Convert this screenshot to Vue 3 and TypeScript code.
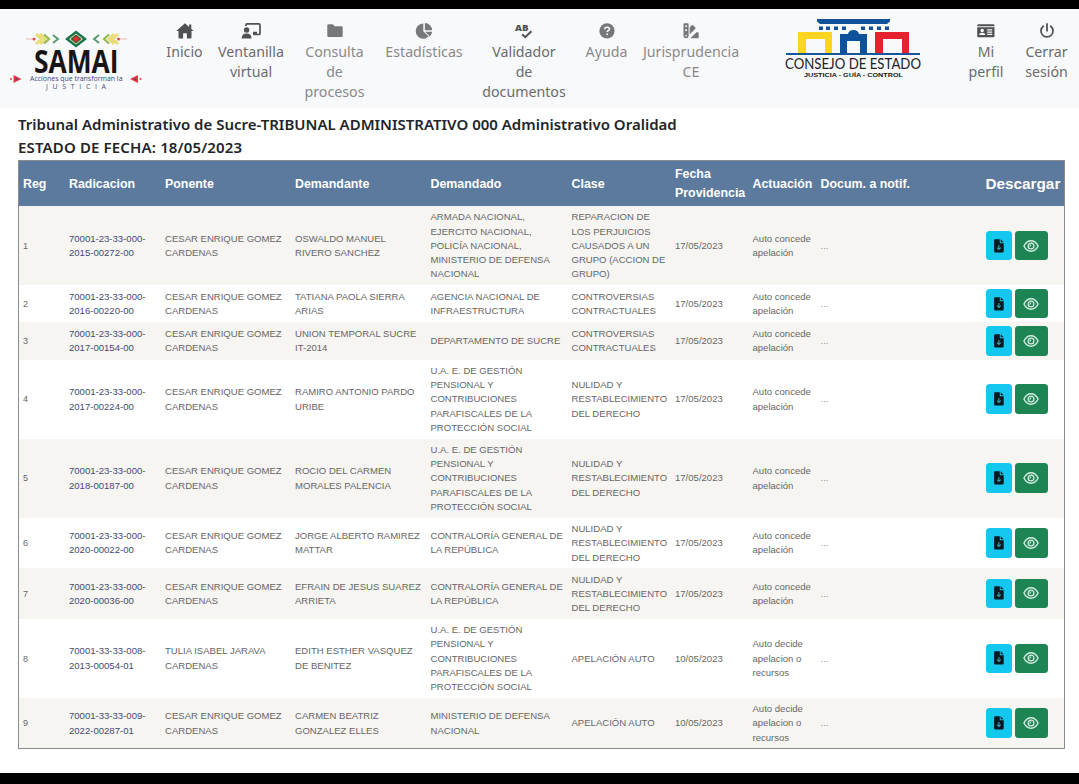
<script setup lang="ts">
interface NavItem {
  icon: string
  lines: string[]
  muted?: boolean
}
interface Row {
  height: number
  rad: string[]
  ponente: string[]
  demandante: string[]
  demandado: string[]
  clase: string[]
  fecha: string
  actuacion: string[]
}

const nav: NavItem[] = [
  { icon: 'home', lines: ['Inicio'] },
  { icon: 'board', lines: ['Ventanilla', 'virtual'] },
  { icon: 'folder', lines: ['Consulta', 'de', 'procesos'], muted: true },
  { icon: 'pie', lines: ['Estadísticas'], muted: true },
  { icon: 'spell', lines: ['Validador', 'de', 'documentos'] },
  { icon: 'help', lines: ['Ayuda'], muted: true },
  { icon: 'swatch', lines: ['Jurisprudencia', 'CE'], muted: true },
]
const account: NavItem[] = [
  { icon: 'card', lines: ['Mi', 'perfil'] },
  { icon: 'power', lines: ['Cerrar', 'sesión'] },
]

const headers: string[][] = [
  ['Reg'], ['Radicacion'], ['Ponente'], ['Demandante'], ['Demandado'], ['Clase'],
  ['Fecha', 'Providencia'], ['Actuación'], ['Docum. a notif.'], ['Descargar'],
]

const cesar = ['CESAR ENRIQUE GOMEZ', 'CARDENAS']
const ugpp = ['U.A. E. DE GESTIÓN', 'PENSIONAL Y', 'CONTRIBUCIONES', 'PARAFISCALES DE LA', 'PROTECCIÓN SOCIAL']
const nulidad = ['NULIDAD Y', 'RESTABLECIMIENTO', 'DEL DERECHO']
const controversias = ['CONTROVERSIAS', 'CONTRACTUALES']
const contraloria = ['CONTRALORÍA GENERAL DE', 'LA REPÚBLICA']
const concede = ['Auto concede', 'apelación']
const decide = ['Auto decide', 'apelacion o', 'recursos']

const rows: Row[] = [
  { height: 79, rad: ['70001-23-33-000-', '2015-00272-00'], ponente: cesar, demandante: ['OSWALDO MANUEL', 'RIVERO SANCHEZ'], demandado: ['ARMADA NACIONAL,', 'EJERCITO NACIONAL,', 'POLICÍA NACIONAL,', 'MINISTERIO DE DEFENSA', 'NACIONAL'], clase: ['REPARACION DE', 'LOS PERJUICIOS', 'CAUSADOS A UN', 'GRUPO (ACCION DE', 'GRUPO)'], fecha: '17/05/2023', actuacion: concede },
  { height: 37.3, rad: ['70001-23-33-000-', '2016-00220-00'], ponente: cesar, demandante: ['TATIANA PAOLA SIERRA', 'ARIAS'], demandado: ['AGENCIA NACIONAL DE', 'INFRAESTRUCTURA'], clase: controversias, fecha: '17/05/2023', actuacion: concede },
  { height: 37.3, rad: ['70001-23-33-000-', '2017-00154-00'], ponente: cesar, demandante: ['UNION TEMPORAL SUCRE', 'IT-2014'], demandado: ['DEPARTAMENTO DE SUCRE'], clase: controversias, fecha: '17/05/2023', actuacion: concede },
  { height: 79, rad: ['70001-23-33-000-', '2017-00224-00'], ponente: cesar, demandante: ['RAMIRO ANTONIO PARDO', 'URIBE'], demandado: ugpp, clase: nulidad, fecha: '17/05/2023', actuacion: concede },
  { height: 79, rad: ['70001-23-33-000-', '2018-00187-00'], ponente: cesar, demandante: ['ROCIO DEL CARMEN', 'MORALES PALENCIA'], demandado: ugpp, clase: nulidad, fecha: '17/05/2023', actuacion: concede },
  { height: 50.6, rad: ['70001-23-33-000-', '2020-00022-00'], ponente: cesar, demandante: ['JORGE ALBERTO RAMIREZ', 'MATTAR'], demandado: contraloria, clase: nulidad, fecha: '17/05/2023', actuacion: concede },
  { height: 50.6, rad: ['70001-23-33-000-', '2020-00036-00'], ponente: cesar, demandante: ['EFRAIN DE JESUS SUAREZ', 'ARRIETA'], demandado: contraloria, clase: nulidad, fecha: '17/05/2023', actuacion: concede },
  { height: 79, rad: ['70001-33-33-008-', '2013-00054-01'], ponente: ['TULIA ISABEL JARAVA', 'CARDENAS'], demandante: ['EDITH ESTHER VASQUEZ', 'DE BENITEZ'], demandado: ugpp, clase: ['APELACIÓN AUTO'], fecha: '10/05/2023', actuacion: decide },
  { height: 50.6, rad: ['70001-33-33-009-', '2022-00287-01'], ponente: cesar, demandante: ['CARMEN BEATRIZ', 'GONZALEZ ELLES'], demandado: ['MINISTERIO DE DEFENSA', 'NACIONAL'], clase: ['APELACIÓN AUTO'], fecha: '10/05/2023', actuacion: decide },
]

const cells = (r: Row, i: number): string[][] => [
  [String(i + 1)], r.rad, r.ponente, r.demandante, r.demandado, r.clase, [r.fecha], r.actuacion, ['...'],
]
</script>

<template>
  <div class="page">
    <div class="bar top"></div>
    <header class="navbar">
      <svg class="samai" width="160" height="99" viewBox="0 9 160 99">
        <g fill="none" stroke-width="2.2">
          <path d="M26 39h9M118 39h9" stroke="#efb5ad" stroke-width="1" />
          <path d="M36 34l5 5-5 5M40 34l5 5-5 5M118 34l-5 5 5 5M114 34l-5 5 5 5" stroke="#e9dc7a" stroke-width="3" />
          <path d="M44 34.5l5 4.5-5 4.5M109 34.5l-5 4.5 5 4.5" stroke="#94b94f" />
          <path d="M53 35l5 4-5 4M99 35l-5 4 5 4" stroke="#5b9e72" stroke-width="2" />
        </g>
        <circle cx="34" cy="39" r="1.5" fill="#dd5148" /><circle cx="118.500" cy="39" r="1.500" fill="#dd5148" />
        <path d="M65 39l11-8.500 11 8.500-11 8.500z" fill="#16764a" />
        <path d="M69 39l7-5.500 7 5.500-7 5.500z" fill="#f0d9ac" />
        <path d="M70.500 39l5.500-4.500 5.500 4.500-5.500 4.500z" fill="#315b3c" />
        <path d="M72.500 39l3.500-3 3.500 3-3.500 3z" fill="#e52c30" />
        <text x="34" y="73.300" class="samai-name" textLength="84.500" lengthAdjust="spacingAndGlyphs">SAMAI</text>
        <text x="30" y="81.200" class="samai-tag" textLength="92.500" lengthAdjust="spacingAndGlyphs">Acciones que transforman la</text>
        <text x="46" y="88.500" class="samai-just" textLength="60">JUSTICIA</text>
        <path d="M13.500 75l8 4-8 4zM138 75l-8 4 8 4z" fill="#e53742" />
        <path d="M15.500 77.500l3 1.500-3 1.500zM136 77.500l-3 1.500 3 1.500z" fill="#70445f" />
        <circle cx="11" cy="79" r="1" fill="#cf4945" /><circle cx="140.500" cy="79" r="1" fill="#cf4945" />
      </svg>

      <a v-for="item in nav" :key="item.icon" class="item" :class="{ muted: item.muted }">
        <svg class="icon" :class="item.icon" width="20" height="16" viewBox="0 0 20 16" fill="currentColor">
          <path v-if="item.icon === 'home'" d="M10 0.300L1.200 8.100h2.300v6.500q0 .900.900.900h3.700v-4.700q0-.600.600-.600h2.600q.600 0 .600.600v4.700h3.700q.900 0 .900-.900V8.100h2.300L16.300 5.900V1.500h-2.200v2.400z" />
          <template v-else-if="item.icon === 'board'">
            <path d="M5 3V1.900Q5 .900 6 .900h12q1 0 1 1v8.600q0 1-1 1h-5.500" fill="none" stroke="currentColor" stroke-width="1.700" />
            <circle cx="5.600" cy="7" r="2.700" />
            <path d="M.700 15.500q0-5 4.900-5t4.900 5zM12 8.800h4v3h-4z" />
          </template>
          <path v-else-if="item.icon === 'folder'" d="M2.300 2.500Q2.300 1.200 3.600 1.200h4.200l2 2h6.600q1.300 0 1.300 1.300v8.300q0 1.300-1.300 1.300H3.600q-1.300 0-1.300-1.300z" />
          <template v-else-if="item.icon === 'pie'">
            <path d="M9.300 .500v7.700l5.300 5.400A7.600 7.600 0 1 1 9.300 .500z" />
            <path d="M10.900 0a7.400 7.400 0 0 1 7.200 7.200h-7.200z" /><path d="M11.200 8.800h7a7.400 7.400 0 0 1-2.400 4.700z" />
          </template>
          <template v-else-if="item.icon === 'spell'">
            <text x="1" y="7.900" font-size="9.500" font-weight="800" textLength="13.500" lengthAdjust="spacingAndGlyphs">AB</text>
            <path d="M8.200 11.200l3 3 6.200-6" fill="none" stroke="currentColor" stroke-width="2" />
          </template>
          <template v-else-if="item.icon === 'help'">
            <circle cx="10" cy="7.900" r="7.600" />
            <path d="M7.600 6.200q.200-2 2.500-2 2.400 0 2.400 1.800 0 1.100-1.300 1.700-1.100.500-1.100 1.300" fill="none" stroke="#f8f9fb" stroke-width="1.500" />
            <circle cx="10.100" cy="11.300" r="1" fill="#f8f9fb" />
          </template>
          <template v-else>
            <path fill-rule="evenodd" d="M3.400.300h3.300q.900 0 .900.900v11.600q0 2.500-2.500 2.500t-2.600-2.500V1.200q0-.900.900-.900zM4.200 2.400v1.700h1.800V2.400zM4.200 6.300v1.700h1.800V6.300zM5.100 11.900a.800.800 0 1 0 .010 0z" />
            <path d="M8.700 4.300l2.100-2q.700-.600 1.300 0l2.200 2.200q.600.700 0 1.300L8.700 11.500zM15.500 9.200h1.300q.900 0 .900.900v4.300q0 .900-.900.900H9.300z" />
          </template>
        </svg>
        <span v-for="l in item.lines" :key="l">{{ l }}</span>
      </a>

      <svg class="consejo" width="213" height="99" viewBox="745 9 213 99">
        <g fill="#0e529b">
          <path d="M817 19h73v2.500l-3 2.500h-67l-3-2.500z" />
          <path d="M819 26.500h4v3.500h-4zM826 26.500h4v3.500h-4zM834 26.500h4v3.500h-4zM842 26.500h4v3.500h-4zM861 26.500h4v3.500h-4zM869 26.500h4v3.500h-4zM877 26.500h4v3.500h-4zM885 26.500h4v3.500h-4z" />
          <path d="M840 53V34h8q1-4 5.500-4t5.500 4h8v19h-7V41h-13v12z" />
        </g>
        <path d="M798 53V32h34v21h-7V39h-19v14z" fill="#fcd522" />
        <path d="M875 53V32h34v21h-7V39h-19v14z" fill="#e5222d" />
        <path d="M786 53h134v2H786z" fill="#155798" />
        <text x="785" y="69" class="ce-name" textLength="136" lengthAdjust="spacingAndGlyphs">CONSEJO DE ESTADO</text>
        <text x="804" y="76.700" class="ce-tag" textLength="99" lengthAdjust="spacingAndGlyphs">JUSTICIA - GUÍA - CONTROL</text>
      </svg>

      <a v-for="item in account" :key="item.icon" class="item">
        <svg class="icon" width="20" height="16" viewBox="0 0 20 16" fill="currentColor">
          <template v-if="item.icon === 'card'">
            <path d="M1.200 3.200V2.500Q1.200 1.200 2.500 1.200h14.700q1.300 0 1.300 1.300v.700zM1.200 4.300h17.300v8.700q0 1.300-1.300 1.300H2.500q-1.300 0-1.300-1.300z" />
            <path d="M3.200 11.900q.100-2.200 3-2.200t3 2.200zM11.200 6.300h5v1.200h-5zM11.200 8.500h5v1.200h-5zM11.200 10.700h5v1.200h-5z" fill="#f8f9fb" />
            <circle cx="6.200" cy="7.500" r="1.700" fill="#f8f9fb" />
          </template>
          <path v-else d="M6.300 3.200a6 6 0 1 0 7.400 0M10 .900v6.900" fill="none" stroke="currentColor" stroke-width="1.800" stroke-linecap="round" />
        </svg>
        <span v-for="l in item.lines" :key="l">{{ l }}</span>
      </a>
    </header>

    <main>
      <h1><span class="court">Tribunal Administrativo de Sucre-TRIBUNAL ADMINISTRATIVO 000 Administrativo Oralidad</span></h1>
      <h1><span class="date">ESTADO DE FECHA: 18/05/2023</span></h1>
      <div class="table">
        <div class="row head">
          <div v-for="h in headers" :key="h[0]" class="cell"><span v-for="l in h" :key="l">{{ l }}</span></div>
        </div>
        <div v-for="(r, i) in rows" :key="i" class="row" :style="{ height: r.height + 'px' }">
          <div v-for="(c, j) in cells(r, i)" :key="j" class="cell" :class="'c' + j">
            <span v-for="l in c" :key="l">{{ l }}</span>
          </div>
          <div class="cell actions">
            <button class="download">
              <svg width="10" height="14" viewBox="0 0 10 14">
                <path d="M1.200.300h4.600v3.900h3.900v8q0 1.300-1.300 1.300H1.300Q.100 13.500.100 12.200V1.400Q.100.300 1.200.300zM6.700.300l3 3h-3z" fill="#06191f" />
                <path d="M4.900 6v4.200M3 8.600l1.900 1.900 1.900-1.900" fill="none" stroke="#3b9fb3" stroke-width="1.100" />
              </svg>
            </button>
            <button class="view">
              <svg width="16" height="12" viewBox="0 0 16 12" fill="none" stroke="#d5eee1">
                <path d="M.900 6Q3.500.800 8 .800t7.100 5.200Q12.500 11.200 8 11.200T.900 6z" stroke-width="1.400" />
                <circle cx="8" cy="6" r="2.900" stroke-width="1.300" />
                <path d="M6.300 6.300q1.500 0 1.500-1.900" stroke-width="1.100" />
              </svg>
            </button>
          </div>
        </div>
      </div>
    </main>
    <div class="bar bottom"></div>
  </div>
</template>

<style>
body { margin: 0; background: #fff; }
</style>

<style scoped>
.page { width: 1079px; height: 784px; display: flex; flex-direction: column; overflow: hidden; background: #fff; font-family: "Liberation Sans", Arial, sans-serif; }
.bar { background: #000; flex: none; }
.top { height: 9px; }
.bottom { height: 11px; }
.navbar { height: 99px; flex: none; background: #f8f9fb; display: grid; grid-template-columns: 160px 49px 84px 83px 96px 104px 61px 108px 213px 56px 65px; }
.item { display: flex; flex-direction: column; align-items: center; padding-top: 14px; color: #505152; font: 14.200px/20px "Noto Sans", "Open Sans", sans-serif; white-space: nowrap; }
.item span { color: #6a6b6d; }
.item.muted { color: #77787a; }
.item.muted span { color: #88898b; }
.icon { display: block; margin-bottom: 3px; flex: none; overflow: visible; font-family: "Open Sans", sans-serif; }
.samai-name { font: 700 32.500px "Open Sans", sans-serif; fill: #181516; }
.samai-tag { font: 7.200px "Open Sans", sans-serif; fill: #3f4677; }
.samai-just { font: 7px "Open Sans", sans-serif; fill: #4d5175; }
.ce-name { font: 14.500px Lato, sans-serif; fill: #222; }
.ce-tag { font: 700 6px "Liberation Sans", sans-serif; fill: #151515; }
main { flex: 1; padding: 5px 14px 0 18px; }
h1 { margin: 0; height: 23px; font: 600 15px/23px "Noto Sans", "Open Sans", sans-serif; color: #212529; white-space: nowrap; }
.court { font-size: 15px; }
.date { font-size: 15px; letter-spacing: 0.150px; }
h1 span { display: block; line-height: 23px; }
h1 + h1 span { line-height: 22px; }
.court { letter-spacing: 0; }
.table { margin-top: 1px; width: 1045px; border: 1px solid #8a8c8f; }
.row { display: grid; grid-template-columns: 46px 96px 130px 135.500px 141px 103.500px 77.500px 68px 165px 1fr; align-items: center; background: #fff; }
.row:nth-child(even) { background: #f6f5f2; }
.row.head { height: 45px; background: #5b7a9d; }
.cell { padding: 1px 0 0 4px; display: flex; flex-direction: column; white-space: nowrap; font-size: 9.550px; line-height: 14.300px; color: #666; }
.head .cell { font-size: 12.400px; font-weight: 700; line-height: 19px; color: #fff; }
.head .cell:last-child { font-size: 15.300px; padding-top: 0; }
.c0 { font-size: 9px; }
.c1 { color: #3f4a76; }
.c8 { color: #8c8c8c; }
.cell.actions { flex-direction: row; gap: 3px; padding-top: 0; }
button { display: flex; align-items: center; justify-content: center; height: 29.500px; padding: 0; border: 0; border-radius: 3.500px; }
.download { width: 26.500px; background: #14c7ef; }
.view { width: 32.500px; background: #1d8554; }
</style>
